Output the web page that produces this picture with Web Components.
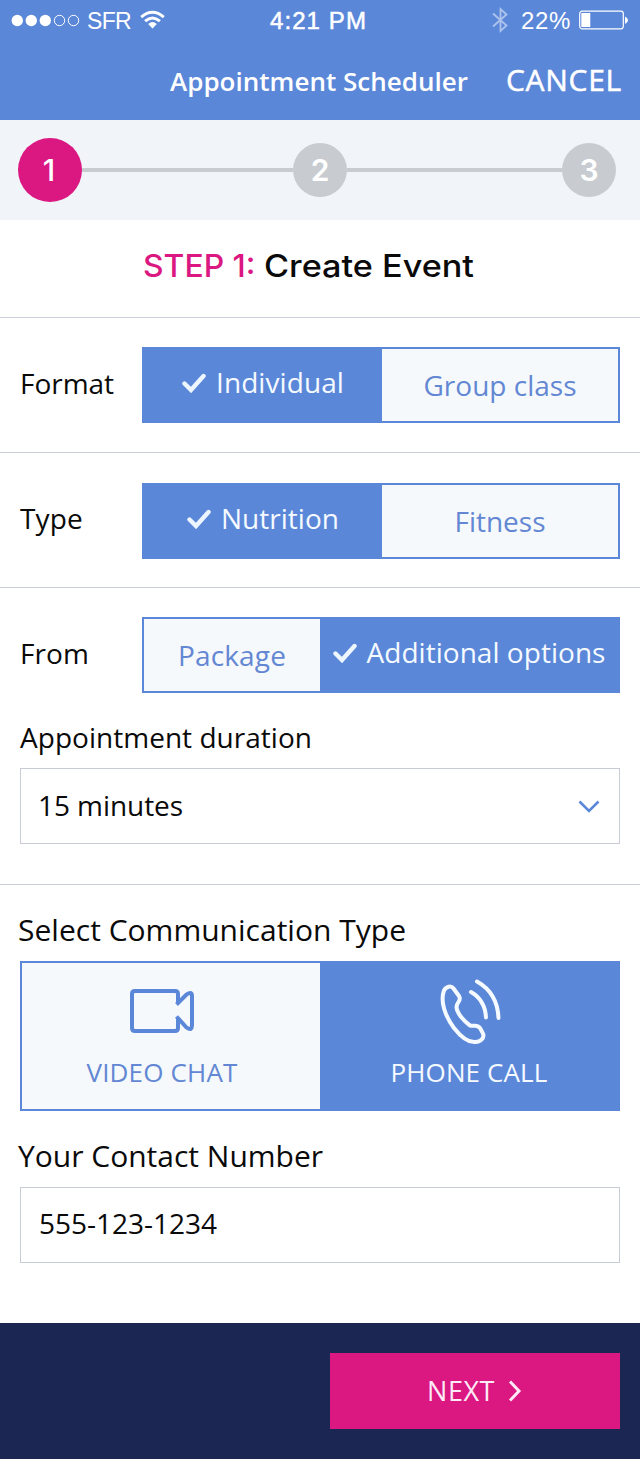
<!DOCTYPE html>
<html lang="en">
<head>
<meta charset="utf-8">
<title>Appointment Scheduler</title>
<style>
  body { margin: 0; background: #fff; font-family: "Open Sans", sans-serif; color: #0a0a0a; }
</style>
</head>
<body>
<scheduler-app></scheduler-app>
<script>
const define = (name, html, ready) => {
  const tpl = document.createElement('template');
  tpl.innerHTML = html.trim();
  customElements.define(name, class extends HTMLElement {
    connectedCallback() {
      if (this.shadowRoot) return;
      this.attachShadow({ mode: 'open' }).appendChild(tpl.content.cloneNode(true));
      if (ready) ready(this, this.shadowRoot);
    }
  });
};

/* One line of text, tracked (or stretched) so that it spans the given width. */
define('fit-text', `<style>
  :host { display: block; flex: none; line-height: 40px; height: 40px; }
  span { display: inline-block; white-space: pre; transform-origin: 0 50%; }
</style><span><slot></slot></span>`, (el, root) => {
  const size = el.getAttribute('size');
  if (size) el.style.fontSize = size + 'px';
  const want = parseFloat(el.getAttribute('w'));
  if (!want) return;
  const span = root.querySelector('span');
  const natural = span.getBoundingClientRect().width;
  if (el.hasAttribute('stretch')) span.style.transform = `scaleX(${(want / natural).toFixed(4)})`;
  else span.style.letterSpacing = ((want - natural) / el.textContent.length).toFixed(3) + 'px';
  el.style.width = want + 'px';
});

define('status-bar', `
<style>
  :host { display: grid; grid-template-columns: 270px 1fr auto; height: 40px; color: #fff;
    font-family: "Liberation Sans", sans-serif; align-items: center; }
  div { display: flex; align-items: center; height: 40px; }
  svg { display: block; flex: none; }
  .left { padding-left: 11px; }
  .right { padding-right: 11px; }
  fit-text { margin-top: 2px; }
  .clock { -webkit-text-stroke: .5px #fff; }
</style>
<div class="left">
  <svg width="70" height="14" viewBox="0 0 70 14"><g fill="#fff"><circle cx="6.3" cy="7.5" r="5.7"/><circle cx="20.3" cy="7.5" r="5.7"/><circle cx="34.3" cy="7.5" r="5.7"/></g><g fill="none" stroke="#fff"><circle cx="48.5" cy="7.5" r="5.2"/><circle cx="62.5" cy="7.5" r="5.2"/></g></svg>
  <fit-text size="23" w="44" style="margin-left:6px">SFR</fit-text>
  <svg width="25" height="20" viewBox="0 0 25 20" style="margin-left:9px"><g fill="none" stroke="#fff" stroke-width="2.9"><path d="M1.2 7.2Q12.5-2.6 23.8 7.2"/><path d="M5.1 11.2Q12.5 4.7 19.9 11.2"/></g><path d="M8.2 14Q12.5 10.2 16.8 14L12.5 18.6Z" fill="#fff"/></svg>
</div>
<div><fit-text class="clock" size="24" w="97">4:21 PM</fit-text></div>
<div class="right">
  <svg width="18" height="28" viewBox="0 0 18 28"><path d="M2 7.5L15.5 19.5L9.5 25V3L15.5 8.5L2 20.5" fill="none" stroke="#fff" stroke-opacity=".5" stroke-width="1.8"/></svg>
  <fit-text size="24" w="50" style="margin-left:12px">22%</fit-text>
  <svg width="50" height="20" viewBox="0 0 50 20" style="margin-left:8px"><rect x=".7" y="1.2" width="43.6" height="17.6" rx="2.5" fill="none" stroke="#fff" stroke-width="1.2"/><rect x="2.3" y="3" width="9" height="14" fill="#fff"/><path d="M46 6.5Q49 8 49 10.2Q49 12.5 46 13.9Z" fill="#fff"/></svg>
</div>`);

define('nav-header', `
<style>
  :host { display: flex; height: 80px; color: #fff; justify-content: flex-end; padding-right: 18px; }
  .t { font-weight: 600; margin: 21px 38px 0 0; }
  .c { -webkit-text-stroke: .5px #fff; margin-top: 20px; }
</style>
<fit-text class="t" size="26" w="298">Appointment Scheduler</fit-text>
<fit-text class="c" size="30" w="116">CANCEL</fit-text>`);

define('step-dot', `
<style>
  :host { display: flex; flex: none; width: 54px; height: 54px; border-radius: 50%; background: #c8ccd1; box-sizing: border-box;
    align-items: center; justify-content: center; color: #fff; font: 600 30px/40px Inter, sans-serif; }
  :host([active]) { width: 64px; height: 64px; background: #db1782; padding-right: 2px; font-weight: 500; }
</style><slot></slot>`);

define('step-track', `
<style>
  :host { display: flex; height: 100px; box-sizing: border-box; background: #f1f5fa; align-items: center; padding: 0 24px 0 18px; }
  i { flex: 1; height: 4px; background: #c8ccd1; }
  i:first-of-type { flex: none; width: 211px; }
</style>
<step-dot active>1</step-dot><i></i><step-dot>2</step-dot><i></i><step-dot>3</step-dot>`);

define('step-title', `
<style>
  :host { display: flex; height: 97px; box-sizing: border-box; padding: 26px 0 0 143px;
    font-family: Inter, sans-serif; font-weight: 500; }
  .n { color: #db1782; }
</style>
<fit-text class="n" size="31" w="121" stretch>STEP 1: </fit-text>
<fit-text size="31" w="210" stretch>Create Event</fit-text>`);

define('form-row', `
<style>
  :host { display: flex; box-sizing: border-box; height: 135px; border-top: 1px solid #cbcfdb; padding: 29px 20px 0 20px; }
  .label { width: 122px; flex: none; padding-top: 16px; }
</style>
<div class="label"><slot name="label"></slot></div><slot></slot>`);

define('segment-group', `
<style>
  :host { display: flex; flex: 1; box-sizing: border-box; height: 76px; border: 2px solid #5b87d9; }
</style><slot></slot>`);

define('segment-option', `
<style>
  :host { display: flex; flex: 1; box-sizing: border-box; align-items: center; justify-content: center;
    background: #f5f9fc; color: #6387d3; }
  :host([selected]) { background: #5b87d9; color: #f4faff; padding-bottom: 6px; }
  svg { display: none; flex: none; margin-right: 10px; margin-top: 2px; }
  :host([selected]) svg { display: block; }
</style>
<svg width="24" height="20" viewBox="0 0 24 20"><path d="M2.5 10.5L9 17L21.5 3" fill="none" stroke="#edf6ff" stroke-width="4.4" stroke-linecap="round" stroke-linejoin="miter"/></svg>
<slot></slot>`);

define('media-option', `
<style>
  :host { display: flex; flex-direction: column; align-items: center; box-sizing: border-box; background: #f5f9fc; color: #6387d3; }
  :host([selected]) { background: #5b87d9; color: #f4faff; }
  .icon { height: 89px; display: flex; align-items: flex-start; }
</style>
<div class="icon"><slot name="icon"></slot></div><slot></slot>`);

define('media-picker', `
<style>
  :host { display: grid; grid-template-columns: 298px 1fr; box-sizing: border-box; height: 150px; border: 2px solid #5b87d9; margin: 0 20px; }
  svg { display: block; }
</style>
<media-option style="padding-right:18px">
  <svg slot="icon" width="66" height="48" viewBox="0 0 66 48" style="margin-top:24px"><g fill="none" stroke="#5b87d9" stroke-width="4"><path d="M49 17V7Q49 4 46 4H6Q3 4 3 7V41Q3 44 6 44H46Q49 44 49 41V30"/><path d="M47.5 17.5L57.5 7.5Q59.5 6 61.5 6Q63 6.5 63 9V38.5Q63 41 61.5 42Q59.5 42 57.5 40.5L47.5 29.5"/></g></svg>
  <fit-text size="26" w="151">VIDEO CHAT</fit-text>
</media-option>
<media-option selected>
  <svg slot="icon" width="64" height="68" viewBox="0 0 64 68" style="margin:15px 0 0 3px"><g fill="none" stroke="#f4faff" stroke-width="4" stroke-linecap="round" stroke-linejoin="round"><path d="M5 12.5C7 8.5 12 7 14.5 10.5L20 18C23 23 17.5 24 17.5 29C18 36 26 44 31 47.5C36 48.5 38 46 41 50L43.5 54.5C46 59 43 63 37 64C30 65 22 59 15 50C6 38 1 23 5 12.5Z"/><path d="M32 14Q46 22 47 39.5"/><path d="M38 3.5Q58.5 15 59.5 40"/></g></svg>
  <fit-text size="26" w="157">PHONE CALL</fit-text>
</media-option>`);

define('field-box', `
<style>
  :host { display: flex; justify-content: space-between; box-sizing: border-box; height: 76px; border: 1px solid #c8ccd6;
    margin: 0 20px; padding: 16px 19px 0 17px; background: #fff; }
</style><slot></slot>`);

define('app-footer', `
<style>
  :host { display: flex; justify-content: flex-end; box-sizing: border-box; height: 136px; background: #1b2752; padding: 30px 20px 0 0; }
  button { display: flex; box-sizing: border-box; width: 290px; height: 76px; border: 0; padding: 18px 0 0 97px; margin: 0;
    background: #db1782; color: #fdeaf6; font-family: inherit; text-align: left; }
</style>
<button><fit-text size="27" w="68">NEXT</fit-text>
<svg width="14" height="22" viewBox="0 0 14 22" style="margin:9px 0 0 13px"><path d="M2 1.5L11 11L2 20.5" fill="none" stroke="#fdeaf6" stroke-width="3"/></svg></button>`);

define('scheduler-app', `
<style>
  :host { display: flex; flex-direction: column; width: 640px; height: 1459px; }
  header { background: #5b87d9; }
  .duration { height: 51px; padding-left: 20px; box-sizing: border-box; }
  hr { width: 100%; height: 1px; margin: 40px 0 0; border: 0; background: #cbcfdb; }
  .media { padding: 25px 0 0 18px; height: 76px; box-sizing: border-box; }
  .contact { padding: 25px 0 0 18px; height: 76px; box-sizing: border-box; }
  app-footer { margin-top: auto; }
</style>
<header><status-bar></status-bar><nav-header></nav-header></header>
<step-track></step-track>
<step-title></step-title>
<form-row><fit-text slot="label" size="28" w="94">Format</fit-text>
  <segment-group><segment-option selected style="flex:none;width:238px"><fit-text size="28" w="128">Individual</fit-text></segment-option><segment-option><fit-text size="28" w="153">Group class</fit-text></segment-option></segment-group></form-row>
<form-row style="padding-top:30px"><fit-text slot="label" size="28" w="63" style="margin-top:-1px">Type</fit-text>
  <segment-group><segment-option selected style="flex:none;width:238px"><fit-text size="28" w="118">Nutrition</fit-text></segment-option><segment-option><fit-text size="28" w="91">Fitness</fit-text></segment-option></segment-group></form-row>
<form-row style="height:130px"><fit-text slot="label" size="28" w="69">From</fit-text>
  <segment-group><segment-option style="flex:none;width:176px"><fit-text size="28" w="108">Package</fit-text></segment-option><segment-option selected><fit-text size="28" w="239">Additional options</fit-text></segment-option></segment-group></form-row>
<div class="duration"><fit-text size="28" w="292">Appointment duration</fit-text></div>
<field-box><fit-text size="28" w="145">15 minutes</fit-text>
  <svg width="22" height="14" viewBox="0 0 22 14" style="margin-top:15px"><path d="M1.5 1.5L11 11L20.5 1.5" fill="none" stroke="#5b87d9" stroke-width="2.6"/></svg></field-box>
<hr>
<div class="media"><fit-text size="30" w="388">Select Communication Type</fit-text></div>
<media-picker></media-picker>
<div class="contact"><fit-text size="30" w="305">Your Contact Number</fit-text></div>
<field-box style="padding:15px 19px 0 18px"><fit-text size="28" w="178">555-123-1234</fit-text></field-box>
<app-footer></app-footer>`);
</script>
</body>
</html>
